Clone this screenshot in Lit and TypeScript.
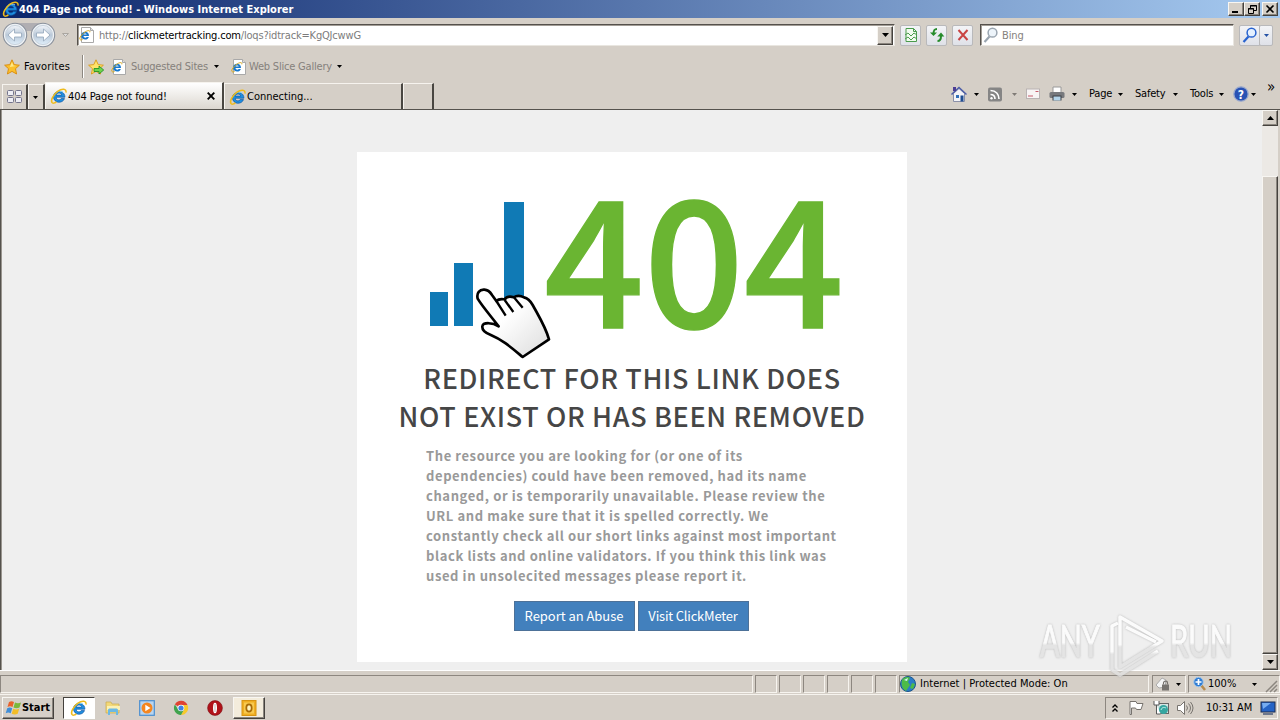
import { LitElement, html, svg, css } from 'lit';
import { customElement } from 'lit/decorators.js';

const ie = html`<svg class="icon" viewBox="0 0 16 16">
  <path d="M13.9 9.2H5.2c.1 3.1 4 3.4 5 1.4h3.3C11.700 16 2.500 15.400 2.500 8.700 2.500 2 13.900 1.200 13.900 9.200zM5.200 7.100h5.500c-.2-2.800-5.200-2.800-5.500 0z" fill="#1f8fe0" stroke="#0b55a5" stroke-width=".7"/>
  <path d="M5 4.500C7.500 2.700 10 2.800 12 4" fill="none" stroke="#8fdcff" stroke-width="1"/>
  <path d="M15 4.600C15.600.3 11 .3 7 3.200 2.500 6.400-.5 12 .9 14.400c.8 1.300 2.700.8 4.500-.5" fill="none" stroke="#eebb1c" stroke-width="1.500"/>
</svg>`;

const pageIcon = html`<svg class="icon" viewBox="0 0 16 16">
  <path d="M2.500.5h9l3 3v12h-12z" fill="#fff" stroke="#a9a9a9"/>
  <path d="M11.500.5v3h3" fill="#ddd" stroke="#a9a9a9"/>
  <path d="M10 9H4.500c.2 2 2.600 2 3.200 1h2.200C8.800 13.900 2 13.200 2 8.600 2 3.700 10.200 3.200 10 9zM4.500 7.500h3.300c-.3-1.500-3-1.500-3.300 0z" fill="#1878cc"/>
  <path d="M10.800 5.300c.6-2.400-2.200-2-4.600-.4C2.700 7.200 0 11 1 12.500c.5.7 1.600.5 2.700-.3" fill="none" stroke="#d9aa20"/>
</svg>`;

const starPath = 'M8 .8l2.200 4.800 5.200.6-3.900 3.500 1.100 5.300L8 12.400 3.400 15l1.100-5.300L.6 6.200l5.200-.6z';

const star = html`<svg class="icon" viewBox="0 0 16 16">
  <path d=${starPath} fill="#fbc02c" stroke="#d98a0a" stroke-width=".9"/>
  <path d="M8 3l1.300 3.500 3 .4-6.500 1z" fill="#ffe98a"/>
</svg>`;

const starAdd = html`<svg class="icon" viewBox="0 0 16 16">
  <path d=${starPath} fill="#ffe36a" stroke="#d99a1a" stroke-width=".9"/>
  <path d="M6 9.500h5V7l4.700 4-4.700 4v-2.500H6z" fill="#6fd44c" stroke="#178a20" stroke-width=".8"/>
</svg>`;

const arrow = html`<svg class="arrow" viewBox="0 0 5 3"><path d="M0 0h5L2.500 3z"/></svg>`;

const magnifier = (ring: string, glass: string) => html`<svg class="icon" viewBox="0 0 16 16">
  <path d="M6.500 9.500L1.500 15" stroke=${ring} stroke-width="2.200"/>
  <circle cx="9.500" cy="5.700" r="4.400" fill=${glass} stroke=${ring} stroke-width="1.500"/>
</svg>`;

const circleArrow = (x: number, dir: number) => svg`
  <circle cx=${x} cy="13" r="11.700" fill="#eef2f6" stroke="#8a919c" stroke-width="1.100"/>
  <circle cx=${x} cy="13" r="9.600" fill="url(#orb)" stroke="#c9d3dd"/>
  <path transform=${`translate(${x} 13) scale(${dir} 1)`}
    d="M-7 0L-.5-6V-2H6.500v4H-.5v4z" fill="#fff" stroke="#93a6ba" stroke-width=".8"/>`;

const smallPanes = [0, 1, 2, 3, 4, 5];

@customElement('app-root')
export class AppRoot extends LitElement {
  static styles = css`
    :host {
      display: flex;
      flex-direction: column;
      position: relative;
      width: 1280px;
      height: 720px;
      overflow: hidden;
      background: #d5cfc7;
      color: #000;
      font: 11px/14px 'DejaVu Sans Condensed', 'DejaVu Sans', sans-serif;
      font-stretch: condensed;
      letter-spacing: -0.1px;
      white-space: nowrap;
    }
    * { box-sizing: border-box; }
    svg { display: block; overflow: visible; }
    .icon { width: 16px; height: 16px; flex: none; }
    .arrow { width: 5px; height: 3px; flex: none; }
    .muted { color: #85817c; }
    .faded { opacity: 0.4; }

    .raised {
      display: flex;
      align-items: center;
      justify-content: center;
      background: #d5cfc7;
      border: 1px solid;
      border-color: #f8f6f2 #45423e #45423e #f8f6f2;
      box-shadow: inset -1px -1px #8a857e;
    }

    .title {
      display: flex;
      align-items: center;
      height: 18px;
      padding: 0 2px 0 3px;
      background: linear-gradient(90deg, #0b256b, #a6caf0);
      color: #fff;
      font-weight: bold;
    }
    .title .caption { flex: 1; padding-top: 2px; letter-spacing: 0; }
    .title .raised { width: 16px; height: 14px; }
    .title .close { margin-left: 2px; }

    .nav { display: flex; align-items: center; height: 34px; padding-left: 2px; }
    .orbs { width: 55px; height: 26px; }
    .nav > .arrow { margin: 0 9px 0 5px; width: 7px; height: 4px; }
    .field {
      display: flex;
      align-items: center;
      height: 22px;
      background: #fff;
      border: 1px solid;
      border-color: #55514c #e9e6e0 #e9e6e0 #55514c;
      box-shadow: inset 1px 1px #a29d96;
    }
    .address { width: 818px; padding: 0 1px 0 1px; margin-left: -1px; }
    .address .url { flex: 1; margin: 2px 0 0 4px; color: #7c7c7c; letter-spacing: -0.18px; }
    .address b { color: #000; font-weight: normal; }
    .address .raised { width: 16px; height: 19px; }
    .tool {
      display: flex;
      align-items: center;
      justify-content: center;
      width: 21px;
      height: 21px;
      border: 1px solid #b9b9bb;
      border-radius: 2px;
      background: linear-gradient(#f3f4f7, #dfe1e8);
      margin-left: 5px;
    }
    .search { width: 254px; margin-left: 7px; padding-left: 2px; }
    .search span { margin: 2px 0 0 3px; }
    .search + .tool { border-radius: 2px 0 0 2px; }
    .go { width: 14px; margin-left: -1px; fill: #2451a5; }

    .favorites {
      display: grid;
      grid-template-columns: 20px 58px 6px 23px 20px 83px 17px 18px 88px 10px;
      align-items: center;
      height: 29px;
      padding-left: 4px;
    }
    .favorites .name { letter-spacing: 0.15px; }
    .favorites .muted { padding-top: 1px; }
    .favorites .muted, .commands { letter-spacing: -0.2px; }
    .rule { width: 2px; height: 23px; border-left: 1px solid #8c8780; background: #fff; }

    .tabs { display: flex; align-items: flex-end; height: 28px; padding-left: 2px; }
    .tab {
      display: flex;
      align-items: center;
      height: 26px;
      border: solid;
      border-width: 1px 2px 0 1px;
      border-color: #f6f3ee #494641 #494641 #f6f3ee;
    }
    .quick { width: 26px; height: 25px; justify-content: center; }
    .drop { width: 17px; height: 25px; justify-content: center; }
    .drop .arrow { margin-right: 2px; }
    .active {
      width: 179px;
      height: 27px;
      padding-left: 5px;
      background: linear-gradient(#fff, #dcd7d0);
    }
    .active span { flex: 1; margin: 2px 0 0 1px; }
    .active svg:last-child { margin-right: 7px; }
    .waiting { width: 179px; padding: 0 0 0 5px; }
    .waiting span { margin: 1px 0 0 1px; letter-spacing: 0; }
    .blank { width: 31px; }
    .commands {
      display: grid;
      grid-template-columns: 23px 14px 24px 14px 23px 23px 17px 29px 17px 38px 17px 29px 14px 18px 16px 12px;
      align-items: center;
      height: 28px;
      margin-left: auto;
      padding: 1px 2px 3px 0;
      width: 329px;
    }
    .more { align-self: start; margin-top: -2px; font-size: 15px; }

    .view {
      display: flex;
      height: 561px;
      border: solid #55524d;
      border-width: 1px 0 0 1px;
      box-shadow: inset 1px 0 #99958f;
    }
    .page { flex: 1; background: #efefef; margin-left: 1px; padding: 42px 0 0 355px; }
    .scroll {
      display: flex;
      flex-direction: column;
      width: 16px;
      margin-right: 2px;
      background: #ece9e5;
    }
    .scroll .raised { height: 16px; }
    .scroll .thumb { height: 478px; margin-top: 50px; }

    .card {
      width: 550px;
      height: 510px;
      padding-top: 28px;
      background: #fff;
      font-family: 'Noto Sans CJK SC', 'Noto Sans CJK JP', sans-serif;
      font-stretch: normal;
    }
    .hero { width: 460px; height: 179px; margin-left: 43px; }
    .digits {
      font-size: 528px;
      font-weight: 500;
      fill: #6ab532;
      stroke: #6ab532;
      stroke-width: 4px;
      letter-spacing: 0;
    }
    h1 {
      margin: 0;
      color: #464646;
      text-align: center;
      font-size: 27px;
      line-height: 38px;
      font-weight: 500;
      letter-spacing: 0.64px;
    }
    .card p {
      margin: 11px 0 15px 69px;
      color: #999;
      font-size: 13px;
      line-height: 20px;
      font-weight: bold;
      letter-spacing: 0.6px;
    }
    .actions { display: flex; justify-content: center; gap: 3px; padding-right: 2px; }
    .action {
      width: 121px;
      height: 30px;
      border: 1px solid #4d7198;
      background: #4280bd;
      color: #fff;
      font-size: 13px;
      line-height: 28px;
      text-align: center;
      letter-spacing: -0.04px;
    }
    .visit { width: 111px; letter-spacing: -0.2px; }

    .status { display: flex; height: 24px; padding-top: 4px; border-top: 1px solid #fff; }
    .pane {
      display: flex;
      align-items: center;
      height: 18px;
      width: 22px;
      margin-right: 2px;
      border: 1px solid;
      border-color: #8d8780 #f7f4ef #f7f4ef #8d8780;
    }
    .wide { width: 753px; }
    .zone { width: 250px; padding-left: 0; margin-right: 3px; gap: 4px; letter-spacing: 0.03px; }
    .lock { width: 34px; padding-left: 2px; gap: 5px; }
    .zoom { flex: 1; margin: 0; padding-left: 3px; }
    .zoom span { width: 44px; margin-left: 0; letter-spacing: 0; }
    .zoom .grip { margin: 4px 0 0 8px; width: 12px; height: 12px; }

    .taskbar { display: flex; align-items: center; height: 26px; padding: 1px 2px; border-top: 1px solid #f6f3ee; }
    .start { width: 52px; height: 22px; font-weight: bold; gap: 0; margin-right: 9px; letter-spacing: -0.05px; }
    .task { width: 32px; height: 22px; display: flex; align-items: center; justify-content: center; margin-right: 2px; }
    .pressed { background: #fff; border: 1px solid; border-color: #45423e #fff #fff #45423e; }
    .outlook { background: #f3ecdc; }
    .tray {
      display: grid;
      grid-template-columns: 17px 24px 24px 29px 54px 16px;
      align-items: center;
      width: 173px;
      height: 22px;
      margin-left: auto;
      padding-left: 6px;
      border: 1px solid;
      border-color: #8d8780 #f7f4ef #f7f4ef #8d8780;
    }

    .watermark {
      position: absolute;
      left: 1036px;
      top: 606px;
      width: 200px;
      height: 70px;
      filter: drop-shadow(0 0 1px #aaa);
      opacity: 0.8;
    }
    .watermark text { font: 400 45px Lato, sans-serif; fill: url(#shine); stroke: url(#shine); stroke-width: 1px; letter-spacing: 0; }
  `;

  renderNav() {
    return html`
      <div class="nav">
        <svg class="orbs" viewBox="0 0 55 26">
          <defs>
            <linearGradient id="orb" x2="0" y2="1">
              <stop offset="0" stop-color="#f2f5f9"/><stop offset=".5" stop-color="#b9c8d8"/><stop offset="1" stop-color="#dfeefa"/>
            </linearGradient>
          </defs>
          <path d="M12 1h30v8H12z" fill="#b0aeb2"/>
          ${circleArrow(13, 1)}${circleArrow(41, -1)}
        </svg>
        <svg class="arrow" viewBox="0 0 7 4"><path d="M.5.500h6l-3 3z" fill="#ddd" stroke="#aaa6a0"/></svg>
        <div class="field address">
          ${pageIcon}
          <span class="url">http://<b>clickmetertracking.com</b>/loqs?idtrack=KgQJcwwG</span>
          <span class="raised"><svg width="7" height="4" viewBox="0 0 7 4"><path d="M0 0h7L3.500 4z"/></svg></span>
        </div>
        <div class="tool">
          <svg class="icon" viewBox="0 0 16 16">
            <path d="M3 1.500h7.500l3 3v10H3z" fill="#f2fbef" stroke="#4a9b4c"/>
            <path d="M10.500 1.500v3h3M2 8l3-2 3 3 3-3 3 2M2 12l3-2 3 3 3-3 3 2" fill="none" stroke="#4a9b4c"/>
          </svg>
        </div>
        <div class="tool">
          <svg class="icon" viewBox="0 0 16 16" fill="none" stroke="#268b2b" stroke-width="2">
            <path d="M8 2C5 2 4.500 3.500 4.500 7"/><path d="M1 5.500h7L4.500 9z" fill="#268b2b" stroke="none"/>
            <path d="M8.500 14c3 0 3.500-2 3.500-5"/><path d="M8.300 9.500h7L12 5.500z" fill="#268b2b" stroke="none"/>
          </svg>
        </div>
        <div class="tool">
          <svg class="icon" viewBox="0 0 16 16"><path d="M3.500 3l9 10M12.500 3l-9 10" stroke="#c94343" stroke-width="2"/></svg>
        </div>
        <div class="field search">${magnifier('#9aa5b0', '#edf4fa')}<span class="muted">Bing</span></div>
        <div class="tool">${magnifier('#2863cf', '#e4f0ff')}</div>
        <div class="tool go">${arrow}</div>
      </div>`;
  }

  renderTabs() {
    return html`
      <div class="tabs">
        <div class="tab quick">
          <svg class="icon" viewBox="0 0 16 16" fill="#eeeef4" stroke="#74748c">
            <rect x=".5" y="1.500" width="6" height="5" rx="1"/><rect x="8.500" y="1.500" width="6" height="5" rx="1"/>
            <rect x=".5" y="8.500" width="6" height="5" rx="1"/><rect x="8.500" y="8.500" width="6" height="5" rx="1"/>
          </svg>
        </div>
        <div class="tab drop">${arrow}</div>
        <div class="tab active">
          ${ie}<span>404 Page not found!</span>
          <svg width="8" height="8" viewBox="0 0 8 8"><path d="M.7.700l6.600 6.600M7.300.700L.7 7.300" stroke="#000" stroke-width="1.900"/></svg>
        </div>
        <div class="tab waiting">${ie}<span>Connecting...</span></div>
        <div class="tab blank"></div>
        <div class="commands">
          <svg class="icon" viewBox="0 0 16 16">
            <path d="M2.500 7.500v8h11v-8L8 2.500z" fill="#f4f4f8" stroke="#8b90a8"/>
            <path d="M.5 8.500L8 1.500l7.500 7" fill="none" stroke="#4c5da8" stroke-width="1.500"/>
            <path d="M2 1h3v4H2z" fill="#4c3d94"/><path d="M5 9h3v3H5z" fill="#3270b8"/><path d="M9.500 9.500h3v6h-3z" fill="#1f4d92"/>
          </svg>
          ${arrow}
          <svg class="icon" viewBox="0 0 16 16">
            <rect x="0" y="1.500" width="14" height="14" rx="2" fill="#858585"/>
            <g fill="none" stroke="#fff" stroke-width="1.600"><path d="M2.500 8.500c3 0 4.500 2 4.500 4.500M2.500 4.500c5.500 0 8.500 4 8.500 8.500"/></g>
            <circle cx="3.500" cy="12.300" r="1.200" fill="#fff"/>
          </svg>
          <span class="faded">${arrow}</span>
          <svg class="icon" viewBox="0 0 16 16">
            <rect x=".5" y="3" width="13" height="9.500" fill="#f8f4f4" stroke="#b9b3b3"/>
            <path d="M2 10h5M9.500 5.500h3" stroke="#c65c6c" stroke-width="1.200"/>
          </svg>
          <svg class="icon" viewBox="0 0 16 16">
            <path d="M4 1h8v6H4z" fill="#fff" stroke="#999"/>
            <rect x=".5" y="6" width="15" height="6" rx="1.500" fill="#77797d"/>
            <path d="M3.500 9.500h9v5h-9z" fill="#3c3f44"/><path d="M4.500 10.500h7v4h-7z" fill="#b3d4ea"/>
          </svg>
          ${arrow}
          <span>Page</span>${arrow}<span>Safety</span>${arrow}<span>Tools</span>${arrow}
          <svg class="icon" viewBox="0 0 16 16">
            <circle cx="8" cy="8" r="7.200" fill="#2952b4" stroke="#9aa9cd" stroke-width="1.300"/>
            <text x="4.800" y="12.500" font-size="12" font-weight="bold" fill="#fff">?</text>
          </svg>
          ${arrow}
          <span class="more">»</span>
        </div>
      </div>`;
  }

  renderPage() {
    return html`
      <div class="view">
        <div class="page">
          <div class="card">
            <svg class="hero" viewBox="0 0 1380 537">
              <defs>
                <linearGradient id="skin" x2="1" y2="1"><stop offset=".4" stop-color="#fff"/><stop offset="1" stop-color="#dcdcdc"/></linearGradient>
              </defs>
              <path d="M90 336h54v102H90zM162 249h57v189h-57zM312 66h60v300h-60z" fill="#107ab5"/>
              <text class="digits" x="432" y="444" textLength="900">404</text>
              <path d="M233 356C229 338 239 328 253 329c14 1 18 8 23 16l13 18c8-8 16-6 25-5 6-8 18-9 27-6 8-5 21-5 31 0 14 3 20 12 26 23 26 47 39 67 49 103l-79 53c-35-29-61-52-97-67-19-7-25-15-24-25 2-13 31-12 49 0-25-32-52-64-63-83z" fill="url(#skin)" stroke="#000" stroke-width="8" stroke-linejoin="round"/>
              <path d="M289 363l28 44M314 360l26 36M343 353l25 30" fill="none" stroke="#000" stroke-width="7"/>
            </svg>
            <h1>REDIRECT FOR THIS LINK DOES<br>NOT EXIST OR HAS BEEN REMOVED</h1>
            <p>
              The resource you are looking for (or one of its<br>
              dependencies) could have been removed, had its name<br>
              changed, or is temporarily unavailable. Please review the<br>
              URL and make sure that it is spelled correctly. We<br>
              constantly check all our short links against most important<br>
              black lists and online validators. If you think this link was<br>
              used in unsolecited messages please report it.
            </p>
            <div class="actions">
              <div class="action">Report an Abuse</div>
              <div class="action visit">Visit ClickMeter</div>
            </div>
          </div>
        </div>
        <div class="scroll">
          <div class="raised"><svg width="7" height="4" viewBox="0 0 7 4"><path d="M0 4h7L3.500 0z"/></svg></div>
          <div class="raised thumb"></div>
          <div class="raised"><svg width="7" height="4" viewBox="0 0 7 4"><path d="M0 0h7L3.500 4z"/></svg></div>
        </div>
      </div>`;
  }

  renderStatus() {
    return html`
      <div class="status">
        <div class="pane wide"></div>
        ${smallPanes.map(() => html`<div class="pane"></div>`)}
        <div class="pane zone">
          <svg class="icon" viewBox="0 0 16 16">
            <circle cx="8" cy="8" r="7.500" fill="#2a7cc8" stroke="#1b558c"/>
            <path d="M2 4c3-4 7-3 8-2L8 6l2 3-4 6C2 13 1 8 2 4zM12 7l3 1-2 5-3-1z" fill="#4dbb48"/>
            <path d="M4 4l4-2-1 3z" fill="#d8f6ff"/>
          </svg>
          Internet | Protected Mode: On
        </div>
        <div class="pane lock">
          <svg class="icon" viewBox="0 0 16 16">
            <path d="M1 9l6-7 4 2-1 7-6 1z" fill="#f5f5f5" stroke="#aaa"/>
            <rect x="7" y="8.500" width="7" height="6" fill="#77736f"/><path d="M8.500 8.500V7c0-2.500 4-2.500 4 0v1.500" fill="none" stroke="#77736f" stroke-width="1.200"/>
          </svg>
          ${arrow}
        </div>
        <div class="pane zoom">
          <svg class="icon" viewBox="0 0 16 16">
            <path d="M9 9l4 5" stroke="#b78b50" stroke-width="2.500"/>
            <circle cx="6.500" cy="6" r="4.700" fill="#2e7bd2" stroke="#9cc3ea"/>
            <path d="M3.500 6h6M6.500 3v6" stroke="#fff" stroke-width="1.700"/>
          </svg>
          <span>100%</span>${arrow}
          <svg class="grip" viewBox="0 0 12 12" stroke="#8c8780" stroke-width="1.500"><path d="M1 12L12 1M5 12l7-7M9 12l3-3"/></svg>
        </div>
      </div>`;
  }

  renderTaskbar() {
    return html`
      <div class="taskbar">
        <div class="raised start">
          <svg class="icon" viewBox="0 0 16 16">
            <path d="M3 2c2-1 3-1 5 0L6.500 7c-2-1-3-1-5 0z" fill="#e9622b"/>
            <path d="M9 2.500c2 1 4 1 6 0L13.500 7.500c-2 1-4 1-6 0z" fill="#7bb83b"/>
            <path d="M1.200 8.200c2-1 3-1 5 0l-1.500 5c-2-1-3-1-5 0z" fill="#3f8ed8"/>
            <path d="M7.200 8.700c2 1 4 1 6 0l-1.500 5c-2 1-4 1-6 0z" fill="#f2bd27"/>
          </svg>
          Start
        </div>
        <div class="task pressed">${ie}</div>
        <div class="task">
          <svg class="icon" viewBox="0 0 16 16">
            <path d="M1 2h5l1 2h7v9H1z" fill="#f2d878" stroke="#c9ab50" stroke-width=".7"/><path d="M2 6h13v4H2z" fill="#fbf1b5"/>
            <path d="M3 15v-5c0-1 1-1.500 2-1.500h6c1 0 2 .5 2 1.500v5h-2v-3H5v3z" fill="#6cb9e4"/>
          </svg>
        </div>
        <div class="task">
          <svg class="icon" viewBox="0 0 16 16">
            <rect x=".7" y=".7" width="14.600" height="14.600" fill="#b8d5f0" stroke="#4a8ed0" stroke-width="1.200"/>
            <circle cx="8" cy="8" r="5.500" fill="#f5861f"/><path d="M6.300 4.800L11.500 8l-5.200 3.200z" fill="#fff"/>
          </svg>
        </div>
        <div class="task">
          <svg class="icon" viewBox="0 0 16 16">
            <path d="M8 8L1.900 4.500A7 7 0 0 1 14.500 5H8z" fill="#df4333"/>
            <path d="M14.500 5A7 7 0 0 1 8 15l3-5.500L8 5z" fill="#f6c92c"/>
            <path d="M1.900 4.500A7 7 0 0 0 8 15l3-5.500-5.500.5z" fill="#40a34d"/>
            <circle cx="8" cy="8" r="3.300" fill="#fff"/><circle cx="8" cy="8" r="2.600" fill="#3f82e4"/>
          </svg>
        </div>
        <div class="task">
          <svg class="icon" viewBox="0 0 16 16">
            <circle cx="8" cy="8" r="7.400" fill="#b01219" stroke="#7c0c10" stroke-width=".6"/>
            <ellipse cx="8" cy="8" rx="2" ry="5.300" fill="#fff"/><path d="M8 4v8" stroke="#a99" stroke-width=".7"/>
          </svg>
        </div>
        <div class="task raised outlook">
          <svg class="icon" viewBox="0 0 16 16">
            <rect x="1" y=".5" width="14" height="15" fill="#f0ae22" stroke="#d79413"/>
            <path d="M3 2.500h10v11H3z" fill="#f8ca50"/><ellipse cx="8" cy="8" rx="2.700" ry="3.600" fill="#fff3bf" stroke="#a86b08" stroke-width="1.700"/>
          </svg>
        </div>
        <div class="tray">
          <svg width="6" height="8" viewBox="0 0 6 8" fill="none" stroke="#000" stroke-width="1.300"><path d="M.5 3.500L3 1l2.500 2.500M.5 7.500L3 5l2.500 2.500"/></svg>
          <svg class="icon" viewBox="0 0 16 16"><path d="M1 14.500V1.500h6l1 2h6l-2 6H7.500l-1-1.500H2.500v6.500z" fill="#fff" stroke="#77736e"/></svg>
          <svg class="icon" viewBox="0 0 16 16">
            <rect x="3.500" y="3.500" width="12" height="10" fill="#d3e5e2" stroke="#666"/>
            <path d="M1 1v4h5V1M3.500 5v9h4" fill="#fff" stroke="#5a5a5a"/>
            <circle cx="10.500" cy="9.500" r="4.500" fill="#35a6a0"/><path d="M8 10c1-3 3-3 5-2" fill="none" stroke="#c5f2ea"/>
          </svg>
          <svg class="icon" viewBox="0 0 16 16" stroke="#77736e">
            <path d="M.5 5.500h3l4-4v13l-4-4h-3z" fill="#fff"/>
            <path d="M9.500 5.500q2 2.500 0 5M11.500 3.500q4 4.500 0 9M13.500 2q5 6 0 12" fill="none"/>
          </svg>
          <span>10:31 AM</span>
          <svg class="icon" viewBox="0 0 16 16">
            <rect x="1" y="2" width="14" height="10" fill="#2563c5" stroke="#1c2c50"/><path d="M2 3h9L3 9z" fill="#76acf0"/>
            <path d="M3 14h10" stroke="#4a5a78" stroke-width="1.500"/>
          </svg>
        </div>
      </div>`;
  }

  render() {
    return html`
      <div class="title">
        ${ie}<span class="caption">404 Page not found! - Windows Internet Explorer</span>
        <div class="raised"><svg width="8" height="8" viewBox="0 0 8 8"><path d="M0 6h6v2H0z"/></svg></div>
        <div class="raised">
          <svg width="9" height="9" viewBox="0 0 9 9" fill="none" stroke="#000"><path d="M2.500 3V.500h6v5H6M2 1h7M.5 3.500h5v5h-5zM0 4h6"/></svg>
        </div>
        <div class="raised close"><svg width="8" height="8" viewBox="0 0 8 8"><path d="M.5.500l7 7M7.500.500l-7 7" stroke="#000" stroke-width="1.600"/></svg></div>
      </div>
      ${this.renderNav()}
      <div class="favorites">
        ${star}<span class="name">Favorites</span><i class="rule"></i>${starAdd}
        ${pageIcon}<span class="muted">Suggested Sites</span>${arrow}
        ${pageIcon}<span class="muted">Web Slice Gallery</span>${arrow}
      </div>
      ${this.renderTabs()} ${this.renderPage()} ${this.renderStatus()} ${this.renderTaskbar()}
      <svg class="watermark" viewBox="0 0 200 70">
        <defs>
          <linearGradient id="shine" x2="0" y2="1"><stop offset=".55" stop-color="#fff"/><stop offset=".6" stop-color="#e2e2e2"/></linearGradient>
        </defs>
        <text x="4" y="51" textLength="60" lengthAdjust="spacingAndGlyphs">ANY</text>
        <text x="134" y="51" textLength="62" lengthAdjust="spacingAndGlyphs">RUN</text>
        <g fill="none" stroke="url(#shine)" stroke-width="3.500" stroke-linejoin="round">
          <path d="M84 11l42 24-42 26z"/><path d="M76 64V20l6-3M76 64l8 5 38-24M90 21l30 15"/>
        </g>
      </svg>`;
  }
}
